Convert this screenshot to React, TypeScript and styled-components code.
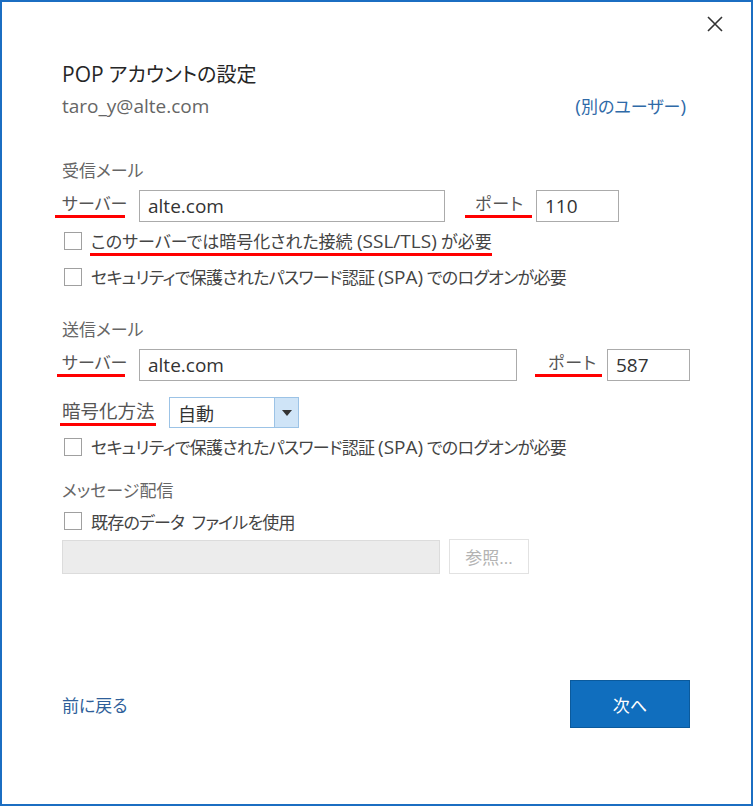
import React from "react";
import styled, { createGlobalStyle } from "styled-components";

const GlobalStyle = createGlobalStyle`
  html, body {
    margin: 0;
    padding: 0;
    background: #ffffff;
  }
  body {
    font-family: "Open Sans", "Noto Sans CJK JP", sans-serif;
    font-feature-settings: "palt";
    color: #444444;
  }
  * {
    box-sizing: border-box;
  }
`;

const Dialog = styled.div`
  width: 753px;
  height: 806px;
  border: 2px solid #1b6ec2;
  background: #ffffff;
  position: relative;
  display: flex;
  flex-direction: column;
  padding: 0 61px 0 60px;
`;

const CloseButton = styled.button`
  position: absolute;
  top: 12px;
  right: 26px;
  width: 20px;
  height: 20px;
  padding: 0;
  border: none;
  background: transparent;
  display: flex;
  align-items: center;
  justify-content: center;
  cursor: pointer;
`;

// latin runs are set larger than the kana/kanji around them
const L = styled.span<{ $size?: number }>`
  font-size: ${(p) => p.$size ?? 19}px;
  letter-spacing: 0;
`;

const Title = styled.h1`
  margin: 58px 0 0;
  font-size: 20px;
  line-height: 28px;
  height: 28px;
  font-weight: 400;
  color: #262626;
  white-space: nowrap;
`;

const AccountRow = styled.div`
  display: flex;
  justify-content: space-between;
  align-items: center;
  margin-top: 6px;
  height: 24px;
  padding-right: 4px;
`;

const Email = styled.span`
  font-size: 19px;
  color: #666666;
`;

const LinkText = styled.a`
  font-size: 17px;
  color: #2f6aa8;
  text-decoration: none;
  cursor: pointer;
`;

const SectionLabel = styled.div<{ $top: number }>`
  margin-top: ${(p) => p.$top}px;
  height: 24px;
  line-height: 24px;
  font-size: 17px;
  color: #666666;
`;

const FieldRow = styled.div<{ $top: number }>`
  display: flex;
  align-items: center;
  margin-top: ${(p) => p.$top}px;
`;

const Marked = styled.span<{ $l: number; $r: number; $b: number; $ls?: number }>`
  position: relative;
  letter-spacing: ${(p) => p.$ls ?? 0}px;
  &::after {
    content: "";
    position: absolute;
    left: ${(p) => -p.$l}px;
    right: ${(p) => -p.$r}px;
    bottom: ${(p) => p.$b}px;
    height: 3px;
    background: #ff0000;
  }
`;

const FieldLabel = styled.span<{ $w: number; $pad?: number; $size?: number }>`
  width: ${(p) => p.$w}px;
  flex-shrink: 0;
  padding-left: ${(p) => p.$pad ?? 0}px;
  font-size: ${(p) => p.$size ?? 17}px;
  color: #555555;
  line-height: 24px;
  margin-top: -4px;
  white-space: nowrap;
`;

const TextBox = styled.div<{ $w: number }>`
  width: ${(p) => p.$w}px;
  flex-shrink: 0;
  height: 32px;
  border: 1px solid #ababab;
  background: #ffffff;
  padding: 0 8px;
  display: flex;
  align-items: center;
  font-size: 19px;
  color: #333333;
`;

const Select = styled.div`
  width: 130px;
  height: 31px;
  border: 1px solid #9cc3e6;
  display: flex;
  background: #ffffff;
`;

const SelectValue = styled.span`
  flex: 1;
  display: flex;
  align-items: center;
  padding-left: 8px;
  font-size: 18px;
  color: #333333;
`;

const SelectArrow = styled.span`
  width: 24px;
  background: #cfe4f7;
  border-left: 1px solid #9cc3e6;
  display: flex;
  align-items: center;
  justify-content: center;
`;

const CheckRow = styled.label<{ $h: number; $top?: number }>`
  display: flex;
  align-items: center;
  height: ${(p) => p.$h}px;
  margin-top: ${(p) => p.$top ?? 0}px;
  font-size: 17px;
  color: #444444;
  white-space: nowrap;
`;

const CheckText = styled.span<{ $ls?: number }>`
  letter-spacing: ${(p) => p.$ls ?? 0}px;
`;

const Box = styled.span`
  width: 18px;
  height: 18px;
  border: 1px solid #a0a0a0;
  background: #ffffff;
  margin: 0 9px 0 2px;
  flex-shrink: 0;
`;

const FileRow = styled.div`
  display: flex;
  align-items: center;
  margin-top: 1px;
`;

const DisabledBox = styled.div`
  width: 378px;
  height: 34px;
  background: #ececec;
  border: 1px solid #dcdcdc;
  margin-right: 9px;
`;

const BrowseButton = styled.button`
  width: 80px;
  height: 35px;
  border: 1px solid #e2e2e2;
  background: #ffffff;
  color: #b3b3b3;
  font-family: inherit;
  font-size: 17px;
  padding: 0;
`;

const Footer = styled.div`
  margin-top: auto;
  margin-bottom: 76px;
  display: flex;
  align-items: center;
  justify-content: space-between;
`;

const BackLink = styled.a`
  font-size: 17px;
  color: #2f5f9a;
  text-decoration: none;
  cursor: pointer;
`;

const NextButton = styled.button`
  width: 120px;
  height: 48px;
  background: #106ebe;
  border: 1px solid #0b5a9c;
  color: #ffffff;
  font-family: inherit;
  font-feature-settings: "palt";
  font-size: 17px;
  cursor: pointer;
`;

const Check = ({ children, h, top }: { children: React.ReactNode; h: number; top?: number }) => (
  <CheckRow $h={h} $top={top}>
    <Box />
    {children}
  </CheckRow>
);

const SpaText = () => (
  <CheckText $ls={-0.7}>
    セキュリティで保護されたパスワード認証 <L>(SPA)</L> でのログオンが必要
  </CheckText>
);

export default function App() {
  return (
    <>
      <GlobalStyle />
      <Dialog>
        <CloseButton aria-label="close">
          <svg width="16" height="16" viewBox="0 0 16 16">
            <path d="M1 1 L15 15 M15 1 L1 15" stroke="#333" strokeWidth="1.6" />
          </svg>
        </CloseButton>

        <Title>
          <L $size={21}>POP</L> アカウントの設定
        </Title>
        <AccountRow>
          <Email>taro_y@alte.com</Email>
          <LinkText>
            <L>(</L>別のユーザー<L>)</L>
          </LinkText>
        </AccountRow>

        {/* 受信 */}
        <SectionLabel $top={41}>受信メール</SectionLabel>
        <FieldRow $top={7}>
          <FieldLabel $w={77}>
            <Marked $l={7} $r={-2} $b={-3}>サーバー</Marked>
          </FieldLabel>
          <TextBox $w={306}>alte.com</TextBox>
          <FieldLabel $w={91} $pad={30}>
            <Marked $l={10} $r={8} $b={-3} $ls={1}>ポート</Marked>
          </FieldLabel>
          <TextBox $w={83}>110</TextBox>
        </FieldRow>
        <Check h={36} top={1}>
          <Marked $l={1} $r={0} $b={-2}>
            このサーバーでは暗号化された接続 <L>(SSL/TLS)</L> が必要
          </Marked>
        </Check>
        <Check h={36}>
          <SpaText />
        </Check>

        {/* 送信 */}
        <SectionLabel $top={23}>送信メール</SectionLabel>
        <FieldRow $top={7}>
          <FieldLabel $w={77}>
            <Marked $l={5} $r={-2} $b={-3}>サーバー</Marked>
          </FieldLabel>
          <TextBox $w={378}>alte.com</TextBox>
          <FieldLabel $w={90} $pad={31}>
            <Marked $l={13} $r={5} $b={-3} $ls={1}>ポート</Marked>
          </FieldLabel>
          <TextBox $w={83}>587</TextBox>
        </FieldRow>
        <FieldRow $top={16}>
          <FieldLabel $w={107} $size={18.5}>
            <Marked $l={2} $r={1} $b={-3}>暗号化方法</Marked>
          </FieldLabel>
          <Select>
            <SelectValue>自動</SelectValue>
            <SelectArrow>
              <svg width="10" height="6" viewBox="0 0 10 6">
                <path d="M0 0 L10 0 L5 6 Z" fill="#333" />
              </svg>
            </SelectArrow>
          </Select>
        </FieldRow>
        <Check h={36} top={1}>
          <SpaText />
        </Check>

        {/* 配信 */}
        <SectionLabel $top={14}>メッセージ配信</SectionLabel>
        <Check h={34} top={1}>
          <CheckText $ls={-0.8}>既存のデータ{"\u2002"}ファイルを使用</CheckText>
        </Check>
        <FileRow>
          <DisabledBox />
          <BrowseButton disabled>参照...</BrowseButton>
        </FileRow>

        <Footer>
          <BackLink>前に戻る</BackLink>
          <NextButton>次へ</NextButton>
        </Footer>
      </Dialog>
    </>
  );
}
